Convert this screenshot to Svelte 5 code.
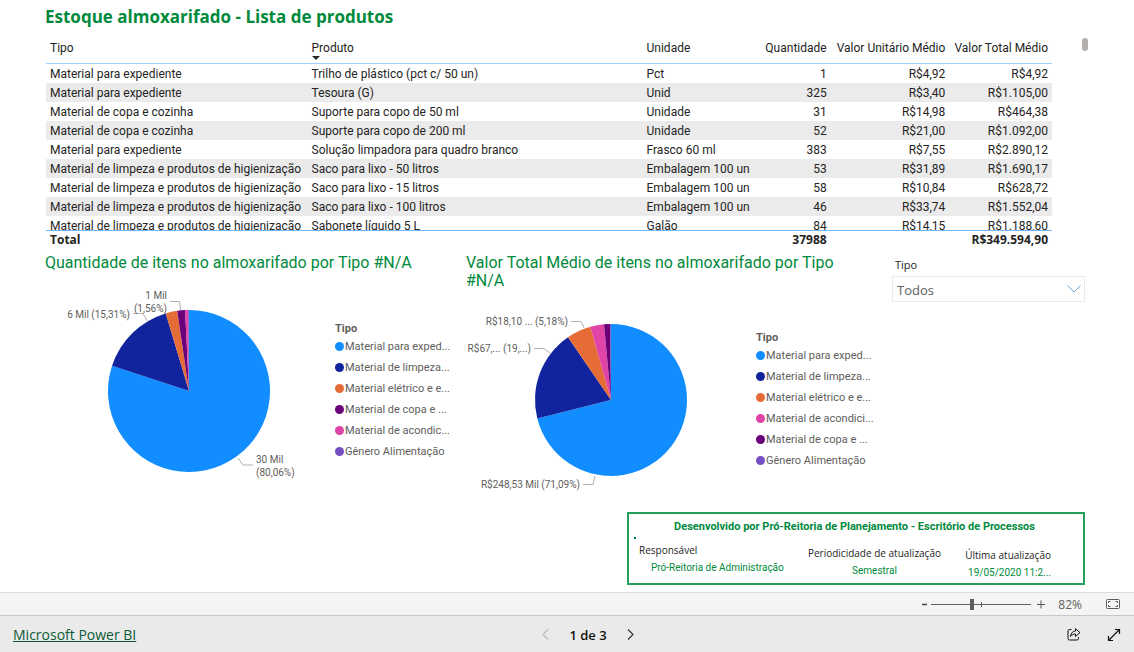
<script>
  const columns = [
    { name: 'Tipo', width: 26 },
    { name: 'Produto', width: 33.3, sorted: true },
    { name: 'Unidade', width: 11.6 },
    { name: 'Quantidade', width: 7.1, numeric: true },
    { name: 'Valor Unitário Médio', width: 11.8, numeric: true },
    { name: 'Valor Total Médio', width: 10.2, numeric: true }
  ];

  const rows = [
    ['Material para expediente', 'Trilho de plástico (pct c/ 50 un)', 'Pct', '1', 'R$4,92', 'R$4,92'],
    ['Material para expediente', 'Tesoura (G)', 'Unid', '325', 'R$3,40', 'R$1.105,00'],
    ['Material de copa e cozinha', 'Suporte para copo de 50 ml', 'Unidade', '31', 'R$14,98', 'R$464,38'],
    ['Material de copa e cozinha', 'Suporte para copo de 200 ml', 'Unidade', '52', 'R$21,00', 'R$1.092,00'],
    ['Material para expediente', 'Solução limpadora para quadro branco', 'Frasco 60 ml', '383', 'R$7,55', 'R$2.890,12'],
    ['Material de limpeza e produtos de higienização', 'Saco para lixo - 50 litros', 'Embalagem 100 un', '53', 'R$31,89', 'R$1.690,17'],
    ['Material de limpeza e produtos de higienização', 'Saco para lixo - 15 litros', 'Embalagem 100 un', '58', 'R$10,84', 'R$628,72'],
    ['Material de limpeza e produtos de higienização', 'Saco para lixo - 100 litros', 'Embalagem 100 un', '46', 'R$33,74', 'R$1.552,04'],
    ['Material de limpeza e produtos de higienização', 'Sabonete líquido 5 L', 'Galão', '84', 'R$14,15', 'R$1.188,60']
  ];

  const charts = [
    {
      title: 'Quantidade de itens no almoxarifado por Tipo #N/A',
      cx: 144,
      r: 81,
      slices: [
        { name: 'Material para exped...', value: 80.06, color: '#118dff' },
        { name: 'Material de limpeza...', value: 15.31, color: '#12239e' },
        { name: 'Material elétrico e e...', value: 2.3, color: '#e66c37' },
        { name: 'Material de copa e ...', value: 1.56, color: '#6b007b' },
        { name: 'Material de acondic...', value: 0.62, color: '#e044a7' },
        { name: 'Gênero Alimentação', value: 0.15, color: '#744ec2' }
      ],
      labels: [
        { x: 122, y: 18, anchor: 'end', text: '1 Mil' },
        { x: 122, y: 31, anchor: 'end', text: '(1,56%)' },
        { x: 85, y: 37, anchor: 'end', text: '6 Mil (15,31%)' },
        { x: 211, y: 182, anchor: 'start', text: '30 Mil' },
        { x: 211, y: 195, anchor: 'start', text: '(80,06%)' }
      ],
      leaders: ['125,20.5 134.5,20.5 135.5,29', '88,32.5 98,32.5 103,41', '193,177 198,184 208,184']
    },
    {
      title: 'Valor Total Médio de itens no almoxarifado por Tipo #N/A',
      cx: 145,
      r: 76,
      slices: [
        { name: 'Material para exped...', value: 71.09, color: '#118dff' },
        { name: 'Material de limpeza...', value: 19.34, color: '#12239e' },
        { name: 'Material elétrico e e...', value: 5.18, color: '#e66c37' },
        { name: 'Material de acondici...', value: 2.92, color: '#e044a7' },
        { name: 'Material de copa e ...', value: 1.3, color: '#6b007b' },
        { name: 'Gênero Alimentação', value: 0.17, color: '#744ec2' }
      ],
      labels: [
        { x: 102, y: 35, anchor: 'end', text: 'R$18,10 ... (5,18%)' },
        { x: 65, y: 62, anchor: 'end', text: 'R$67,... (19,...)' },
        { x: 114, y: 198, anchor: 'end', text: 'R$248,53 Mil (71,09%)' }
      ],
      leaders: ['105,31.5 115,31.5 118,38', '68,58.5 78,58.5 84,63', '117,194.5 127,194.5 129,186']
    }
  ];

  const CY = 110;

  const info = [
    { label: 'Responsável', value: 'Pró-Reitoria de Administração' },
    { label: 'Periodicidade de atualização', value: 'Semestral' },
    { label: 'Última atualização', value: '19/05/2020 11:2...' }
  ];

  let tipo = $state('Todos');
  let zoom = $state(82);
  let page = $state(1);
  const pageCount = 3;

  // clockwise from 12 o'clock
  function arcs({ slices, cx, r }) {
    let start = 0;
    return slices.map((slice) => {
      const end = start + (slice.value / 100) * Math.PI * 2;
      const large = end - start > Math.PI ? 1 : 0;
      const x1 = cx + r * Math.sin(start);
      const y1 = CY - r * Math.cos(start);
      const x2 = cx + r * Math.sin(end);
      const y2 = CY - r * Math.cos(end);
      start = end;
      return { color: slice.color, d: `M${cx} ${CY}L${x1} ${y1}A${r} ${r} 0 ${large} 1 ${x2} ${y2}Z` };
    });
  }
</script>

<div class="app">
  <main class="report">
    <h1>Estoque almoxarifado - Lista de produtos</h1>

    <div class="table-area">
      <div class="table-wrap">
        <table>
          <colgroup>
            {#each columns as col}
              <col style="width: {col.width}%" />
            {/each}
          </colgroup>
          <thead>
            <tr>
              {#each columns as col}
                <th scope="col" class:numeric={col.numeric}>
                  {col.name}
                  {#if col.sorted}<span class="sort"></span>{/if}
                </th>
              {/each}
            </tr>
          </thead>
          <tbody>
            {#each rows as row}
              <tr>
                {#each row as cell, i}
                  <td class:numeric={columns[i].numeric}>{cell}</td>
                {/each}
              </tr>
            {/each}
          </tbody>
          <tfoot>
            <tr>
              <th scope="row" colspan="3">Total</th>
              <td class="numeric">37988</td>
              <td></td>
              <td class="numeric">R$349.594,90</td>
            </tr>
          </tfoot>
        </table>
      </div>
      <div class="scroll-thumb"></div>
    </div>

    <div class="visuals">
      {#each charts as chart}
        <section class="chart">
          <h2>{chart.title}</h2>
          <div class="chart-body">
            <svg class="pie" width="290" height="220" viewBox="0 0 290 220" role="img" aria-label={chart.title}>
              {#each arcs(chart) as arc}
                <path d={arc.d} fill={arc.color} />
              {/each}
              {#each chart.leaders as points}
                <polyline {points} fill="none" stroke="#b3b0ad" />
              {/each}
              {#each chart.labels as label}
                <text x={label.x} y={label.y} text-anchor={label.anchor}>{label.text}</text>
              {/each}
            </svg>
            <div class="legend">
              <h3>Tipo</h3>
              <ul>
                {#each chart.slices as slice}
                  <li><span class="dot" style="background: {slice.color}"></span>{slice.name}</li>
                {/each}
              </ul>
            </div>
          </div>
        </section>
      {/each}

      <div class="slicer">
        <label for="tipo">Tipo</label>
        <div class="select">
          <select id="tipo" bind:value={tipo}>
            <option>Todos</option>
            {#each charts[0].slices as slice}
              <option>{slice.name}</option>
            {/each}
          </select>
          <svg width="14" height="8" viewBox="0 0 14 8" fill="none" stroke="#6ba3c9"><path d="M.5 .5 7 7 13.500 .5" /></svg>
        </div>
      </div>
    </div>

    <section class="card">
      <h2>Desenvolvido por Pró-Reitoria de Planejamento - Escritório de Processos</h2>
      <span class="mark"></span>
      <dl>
        {#each info as item}
          <div>
            <dt>{item.label}</dt>
            <dd>{item.value}</dd>
          </div>
        {/each}
      </dl>
    </section>
  </main>

  <div class="zoom-bar">
    <button type="button" aria-label="Reduzir" onclick={() => (zoom = Math.max(10, zoom - 10))}>
      <svg width="5" height="12" viewBox="0 0 5 12" stroke="#444" stroke-width="1.500"><path d="M0 6.500h5" /></svg>
    </button>
    <input type="range" min="10" max="190" aria-label="Zoom" bind:value={zoom} />
    <button type="button" aria-label="Ampliar" onclick={() => (zoom = Math.min(190, zoom + 10))}>
      <svg width="8" height="12" viewBox="0 0 8 12" stroke="#555"><path d="M0 6.500h8M4 2.500v8" /></svg>
    </button>
    <output>{zoom}%</output>
    <button type="button" aria-label="Ajustar à página" onclick={() => (zoom = 82)}>
      <svg width="14" height="10" viewBox="0 0 14 10" fill="none" stroke="#605e5c">
        <rect x=".5" y=".5" width="13" height="9" rx="1" />
        <path d="M4.500 2.500h-2v1.500M4.500 7.500h-2V6M9.500 2.500h2v1.500M9.500 7.500h2V6" />
      </svg>
    </button>
  </div>

  <footer>
    <a href="https://powerbi.microsoft.com">Microsoft Power BI</a>
    <nav aria-label="Páginas">
      <button type="button" aria-label="Página anterior" disabled={page === 1} onclick={() => page--}>
        <svg width="7" height="11" viewBox="0 0 7 11" fill="none" stroke="currentColor" stroke-width="1.200"><path d="M6 .5 1 5.500l5 5" /></svg>
      </button>
      <span>{page} de {pageCount}</span>
      <button type="button" aria-label="Próxima página" disabled={page === pageCount} onclick={() => page++}>
        <svg width="7" height="11" viewBox="0 0 7 11" fill="none" stroke="currentColor" stroke-width="1.200"><path d="m1 .5 5 5-5 5" /></svg>
      </button>
    </nav>
    <div class="actions">
      <button type="button" aria-label="Compartilhar">
        <svg width="14" height="13" viewBox="0 0 14 13" fill="none" stroke="#111" stroke-linejoin="round">
          <path d="M4.500 1.500h-2q-1.500 0-1.500 1.500v7.500Q1 12 2.500 12h7.500q1.500 0 1.500-1.500V9" />
          <path d="M8.500 .7v2.300C5.500 3.200 4 5.200 3.500 8.500 5 6.600 6.500 6 8.500 6v2.500L13 4.600z" />
        </svg>
      </button>
      <button type="button" aria-label="Tela inteira">
        <svg width="14" height="14" viewBox="0 0 14 14" fill="none" stroke="#111" stroke-width="1.200">
          <path d="M1.500 12.500l11-11M8 1.500h4.500V6M1.500 8v4.500H6" />
        </svg>
      </button>
    </div>
  </footer>
</div>

<style>
  :global(body) {
    margin: 0;
    background: #fff;
  }

  .app {
    display: flex;
    flex-direction: column;
    min-height: 100vh;
    font-family: 'Open Sans', 'Noto Sans', sans-serif;
    font-size: 12px;
    color: #252423;
  }

  h1,
  h2,
  h3,
  ul,
  dl,
  dd {
    margin: 0;
    padding: 0;
  }

  button {
    display: flex;
    padding: 0;
    border: 0;
    background: none;
    color: #333;
    cursor: pointer;
  }

  button:disabled {
    color: #bbb;
    cursor: default;
  }

  .report {
    flex: 1;
    padding: 5px 49px 7px 45px;
  }

  h1 {
    font-size: 17px;
    font-weight: 700;
    line-height: 24px;
    color: #018a3d;
  }

  .table-area {
    display: flex;
    justify-content: space-between;
    margin-top: 9px;
    padding-left: 1px;
  }

  .table-wrap {
    flex: 1;
    height: 211px;
    margin-right: 30px;
    overflow: hidden;
  }

  table {
    width: 100%;
    table-layout: fixed;
    border-collapse: separate;
    border-spacing: 0;
    font-family: Roboto, sans-serif;
    line-height: 18px;
  }

  th,
  td {
    padding: 0 4px;
    font-weight: 400;
    text-align: left;
    white-space: nowrap;
  }

  td {
    height: 19px;
    padding-top: 1px;
    box-sizing: border-box;
  }

  thead th {
    position: relative;
    height: 24px;
    padding-top: 1px;
    border-bottom: 1px solid #a0d1ff;
    vertical-align: top;
  }

  .numeric {
    text-align: right;
  }

  .sort {
    position: absolute;
    left: 4px;
    bottom: 3px;
    border: 4px solid transparent;
    border-top-color: #252423;
    border-bottom: 0;
  }

  tbody tr:nth-child(even) {
    background: #ebebeb;
  }

  tfoot {
    position: sticky;
    bottom: 0;
    background: #fff;
    font-family: 'Open Sans', 'Noto Sans', sans-serif;
  }

  tfoot th,
  tfoot td {
    border-top: 1px solid #70b8fb;
    padding-top: 0;
    font-weight: 700;
  }

  .scroll-thumb {
    width: 6px;
    height: 13px;
    margin-right: -3px;
    border-radius: 3px;
    background: #b3b0ad;
  }

  .visuals {
    display: grid;
    grid-template-columns: 421fr 426fr 193fr;
    min-height: 256px;
    margin-top: 5px;
  }

  .chart {
    display: flex;
    flex-direction: column;
  }

  .chart h2 {
    padding-right: 40px;
    font-family: Roboto, sans-serif;
    font-size: 16px;
    font-weight: 400;
    line-height: 18px;
    color: #018a3d;
  }

  .chart-body {
    flex: 1;
    display: flex;
    align-items: center;
  }

  .pie {
    flex: none;
  }

  .pie text {
    font-family: Roboto, sans-serif;
    font-size: 10px;
    fill: #605e5c;
  }

  .legend {
    padding-top: 1px;
    font-family: Roboto, sans-serif;
    font-size: 11px;
    color: #605e5c;
    white-space: nowrap;
  }

  .legend h3 {
    font-size: 11px;
    font-weight: 700;
    line-height: 14px;
  }

  .legend li {
    display: flex;
    align-items: center;
    gap: 1px;
    line-height: 21px;
  }

  .dot {
    width: 9px;
    height: 9px;
    border-radius: 50%;
  }

  .slicer label {
    display: block;
    padding-left: 3px;
    font-size: 11px;
    line-height: 22px;
  }

  .select {
    position: relative;
  }

  .select svg {
    position: absolute;
    top: 9px;
    right: 4px;
    pointer-events: none;
  }

  select {
    appearance: none;
    display: block;
    width: 100%;
    height: 26px;
    padding: 1px 24px 0 4px;
    border: 1px solid #eaeaea;
    border-radius: 0;
    background: #fff;
    font: inherit;
    font-size: 13px;
    color: #605e5c;
  }

  .card {
    box-sizing: border-box;
    width: 458px;
    margin: 2px 0 0 auto;
    padding: 4px 8px 2px 5px;
    border: 2px solid #25a05b;
  }

  .card h2 {
    font-family: Roboto, sans-serif;
    font-size: 11px;
    line-height: 18px;
    text-align: center;
    color: #018a3d;
  }

  .mark {
    display: block;
    width: 2px;
    height: 2px;
    margin-top: 1px;
    background: #018a3d;
  }

  .card dl {
    display: flex;
    justify-content: space-between;
    height: 42px;
    padding: 3px 24px 0 5px;
    box-sizing: border-box;
  }

  .card dl div:nth-child(2) {
    align-self: center;
    text-align: center;
  }

  .card dl div:last-child {
    align-self: flex-end;
    text-align: right;
  }

  .card dt {
    font-size: 10px;
    line-height: 17px;
  }

  .card dd {
    font-family: Roboto, sans-serif;
    font-size: 10px;
    line-height: 17px;
    color: #018a3d;
  }

  .card div:first-child dd {
    padding-left: 12px;
  }

  .zoom-bar {
    display: flex;
    align-items: center;
    justify-content: flex-end;
    height: 22px;
    padding-right: 14px;
    border-top: 1px solid #dcdcdc;
    background: #f4f4f4;
    color: #605e5c;
  }

  .zoom-bar input {
    appearance: none;
    width: 100px;
    height: 12px;
    margin: 0 6px 0 4px;
    background:
      linear-gradient(#605e5c, #605e5c) 50px 50% / 1px 5px no-repeat,
      linear-gradient(#605e5c, #605e5c) 0 50% / 100% 1px no-repeat;
  }

  .zoom-bar input::-webkit-slider-thumb {
    appearance: none;
    width: 4px;
    height: 11px;
    background: #605e5c;
  }

  .zoom-bar output {
    margin: 0 24px 0 13px;
  }

  footer {
    display: grid;
    grid-template-columns: 1fr auto 1fr;
    align-items: center;
    height: 35px;
    padding: 1px 13px;
    border-top: 1px solid #c8c8c8;
    background: #eaeaea;
    box-sizing: content-box;
  }

  footer a {
    font-size: 14px;
    color: #0b5a35;
  }

  footer nav {
    display: flex;
    align-items: center;
    gap: 20px;
    padding-left: 42px;
    font-size: 13px;
    font-weight: 600;
    color: #111;
  }

  .actions {
    display: flex;
    justify-content: flex-end;
    align-items: center;
    gap: 26px;
  }
</style>
